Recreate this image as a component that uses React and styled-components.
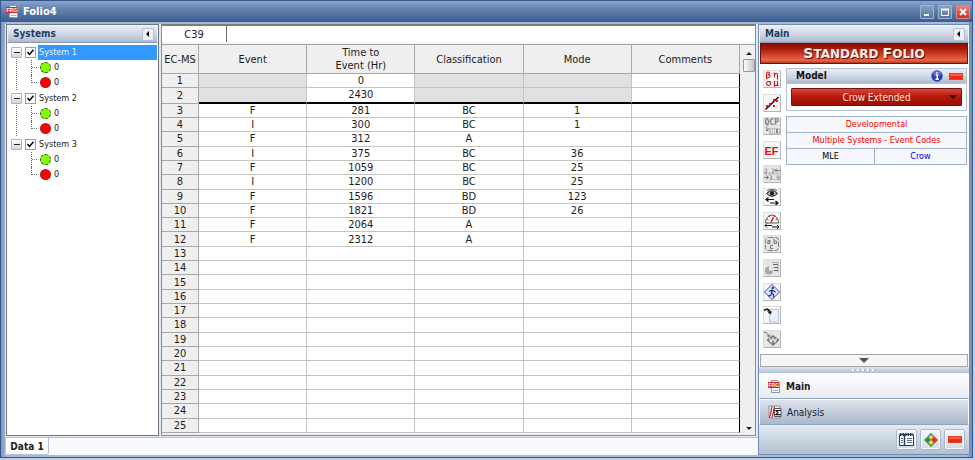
import React, { useState } from 'react';
import styled, { createGlobalStyle, css } from 'styled-components';

const GlobalStyle = createGlobalStyle`
  * {
    box-sizing: border-box;
  }

  body {
    margin: 0;
    font-family: Tahoma, 'DejaVu Sans Condensed', 'DejaVu Sans', sans-serif;
    font-size: 9px;
    color: #1c1c1c;
  }

  button, input {
    font: inherit;
    color: inherit;
  }
`;

const steelBar = 'linear-gradient(#e8edf4 0%, #d3dbe7 45%, #adbacd 100%)';

// Window frame
const Desktop = styled.div`
  height: 100vh;
  padding: 0 2px 2px 0;
  background: #bcd0ea;
`;

const Window = styled.div`
  display: flex;
  flex-direction: column;
  height: 100%;
  border: 1px solid #35568a;
  background: linear-gradient(90deg, #7e97bc, #a9bad3 6px, #a9bad3 calc(100% - 6px), #6f8bb5);
`;

const TitleBar = styled.header`
  display: flex;
  align-items: center;
  gap: 4px;
  flex: none;
  height: 21px;
  padding: 0 2px 0 5px;
  background: linear-gradient(#8ba5ca 0%, #6b89b4 30%, #3a5b8f 100%);
`;

const WindowTitle = styled.h1`
  flex: 1;
  margin: 0;
  font-size: 11px;
  font-weight: 700;
  line-height: 16px;
  color: #fff;
`;

const CaptionButton = styled.button`
  display: flex;
  align-items: center;
  justify-content: center;
  width: 14px;
  height: 14px;
  padding: 0;
  border: 1px solid ${({ $danger }) => ($danger ? '#e08a84' : '#9db4d4')};
  border-radius: 1px;
  background: ${({ $danger }) =>
    $danger ? 'linear-gradient(#ee8077, #c9302b)' : 'linear-gradient(#86a1c8, #56759f)'};
`;

const Body = styled.div`
  display: flex;
  flex: 1;
  min-height: 0;
  padding: 2px 2px 2px 4px;
`;

const Workspace = styled.div`
  display: flex;
  flex-direction: column;
  flex: 1;
  min-width: 0;
`;

const Panes = styled.div`
  display: flex;
  flex: 1;
  gap: 2px;
  min-height: 0;
  padding: 0 2px 1px 1px;
  background: #e3e8ef;
`;

// Systems tree
const SystemsPane = styled.aside`
  display: flex;
  flex-direction: column;
  flex: none;
  width: 153px;
  border: 1px solid #6e7784;
  background: #fff;
`;

const PaneHeader = styled.div`
  display: flex;
  align-items: center;
  justify-content: space-between;
  flex: none;
  height: 18px;
  padding: 0 3px 0 5px;
  border: 1px solid #f1f4f8;
  border-bottom-color: #8898ae;
  background: ${steelBar};
`;

const PaneTitle = styled.h2`
  margin: 0;
  font-size: 10px;
  font-weight: 700;
  line-height: 14px;
  color: ${({ $dark }) => ($dark ? '#111' : '#1f3a66')};
`;

const CollapseButton = styled.button`
  display: flex;
  align-items: center;
  justify-content: center;
  width: 12px;
  height: 13px;
  padding: 0;
  border: 1px solid #b5c0d0;
  border-radius: 2px;
  background: #edf1f6;
`;

const Tree = styled.ul`
  margin: 0;
  padding: 1px 1px 0 4px;
  list-style: none;
`;

// The dotted line joins one system's expander to the next
const TreeGroup = styled.li`
  &:not(:last-child) {
    background: repeating-linear-gradient(#777 0 1px, transparent 1px 2px) 5px 13px / 1px 100% no-repeat;
  }
`;

const TreeRow = styled.div`
  display: flex;
  align-items: center;
  height: 16px;
`;

const Expander = styled.button`
  display: flex;
  align-items: center;
  justify-content: center;
  width: 11px;
  height: 11px;
  padding: 0;
  border: 1px solid #a9b4c4;
  border-radius: 1px;
  background: linear-gradient(#fff, #cfd7e2);

  &::before {
    content: '';
    width: 6px;
    height: 1px;
    background: #222;
  }
`;

const TreeLabel = styled.label`
  display: flex;
  align-items: center;
  flex: 1;
  height: 100%;
`;

const TreeCheck = styled.input`
  appearance: none;
  width: 11px;
  height: 11px;
  margin: 0 2px 0 3px;
  border: 1px solid #8ba0bd;
  background: #fff;

  &:checked {
    background: #fff url("data:image/svg+xml,%3Csvg xmlns='http://www.w3.org/2000/svg' viewBox='0 0 9 9'%3E%3Cpath d='M1.5 4l2 2.4L7.5 1.8' fill='none' stroke='%23000' stroke-width='1.5'/%3E%3C/svg%3E");
  }
`;

const TreeText = styled.span`
  flex: 1;
  height: 15px;
  padding-left: 1px;
  line-height: 15px;
  color: ${({ $selected }) => ($selected ? '#e8f3ff' : '#1c1c1c')};
  background: ${({ $selected }) => ($selected ? '#3399ff' : 'none')};
`;

const TreeLeaves = styled.ul`
  margin: 0;
  padding: 0 0 0 20px;
  list-style: none;
`;

const TreeLeaf = styled.li`
  display: flex;
  align-items: center;
  gap: 3px;
  height: 15px;
  line-height: 15px;
`;

const Branch = styled.span`
  align-self: flex-start;
  width: 7px;
  height: ${({ $last }) => ($last ? 8 : 15)}px;
  margin-right: -1px;
  border-left: 1px dotted #666;
  background: repeating-linear-gradient(90deg, #777 0 1px, transparent 1px 2px) 0 7px / 100% 1px no-repeat;
`;

const Dot = styled.span`
  width: 11px;
  height: 11px;
  border: 1px dashed #444;
  border-radius: 50%;
  background: ${({ $color }) => $color};
`;

// Data sheet
const SheetPane = styled.main`
  display: flex;
  flex-direction: column;
  flex: 1;
  min-width: 0;
  border: 1px solid #8c8c8c;
  border-top: 2px solid #7c7c7c;
  background: #efefef;
`;

const FormulaBar = styled.div`
  display: flex;
  flex: none;
  height: 19px;
  padding-bottom: 2px;
  border-bottom: 1px solid #a0a0a0;
  background: #f4f4f4;
`;

const CellName = styled.label`
  flex: none;
  width: 64px;
  font-size: 11px;
  line-height: 17px;
  text-align: center;
  background: #fff;
`;

const FormulaInput = styled.input`
  flex: 1;
  min-width: 0;
  padding: 0 4px;
  border: 0;
  border-left: 1px solid #707070;
  background: #fff;
  outline: none;
`;

const SheetArea = styled.div`
  display: flex;
  flex: 1;
  min-height: 0;
`;

const SheetScroll = styled.div`
  flex: 1;
  min-width: 0;
  height: 100%;
  padding-bottom: 2px;
  overflow: hidden;
`;

const Sheet = styled.table`
  width: 100%;
  height: 100%;
  table-layout: fixed;
  border-collapse: separate;
  border-spacing: 0;
  font-size: 11px;
  line-height: 13px;
  text-align: center;
`;

const HeadCell = styled.th`
  width: ${({ $narrow }) => ($narrow ? '37px' : 'auto')};
  height: 29px;
  padding: 0;
  border-right: 1px solid #a8a8a8;
  border-bottom: 1px solid #a8a8a8;
  font-weight: 400;
  white-space: pre-line;
  background: #efefef;
`;

const RowHead = styled.th`
  padding: 0;
  border-right: 1px solid #a8a8a8;
  border-bottom: 1px solid #a8a8a8;
  font-weight: 400;
  background: #efefef;
`;

const Cell = styled.td`
  padding: 0;
  border-right: 1px solid #c4c4c4;
  border-bottom: 1px solid #c4c4c4;
  background: ${({ $locked }) => ($locked ? '#e1e1e1' : '#fff')};

  &:last-child {
    border-right: 1px solid #000;
  }

  ${({ $divider }) =>
    $divider &&
    css`
      border-bottom: 2px solid #000;
    `}
`;

const ScrollBar = styled.div`
  display: flex;
  flex-direction: column;
  align-items: center;
  flex: none;
  width: 15px;
  padding: 3px 0 2px 3px;
  background: #efefef;
`;

const ScrollArrow = styled.button`
  display: flex;
  width: 12px;
  height: 10px;
  padding: 0;
  align-items: center;
  justify-content: center;
  border: 0;
  background: none;
`;

const ScrollThumb = styled.div`
  width: 12px;
  height: 13px;
  margin: 1px 0 auto;
  border: 1px solid #979797;
  border-radius: 1px;
  background: linear-gradient(90deg, #fafafa, #c6c6c6);
`;

// Sheet tabs
const SheetTabs = styled.nav`
  display: flex;
  flex: none;
  height: 18px;
  border-top: 1px solid #b4c4da;
  background: #f8fafd;
`;

const SheetTab = styled.button`
  width: 44px;
  padding: 0;
  border: 1px solid #b4c4da;
  border-top: 0;
  border-radius: 0 0 3px 3px;
  font-size: 10px;
  font-weight: 700;
  white-space: nowrap;
  background: #fff;
`;

// Control panel
const ControlPanel = styled.aside`
  display: flex;
  flex-direction: column;
  flex: none;
  width: 212px;
  border: 1px solid #6d8cba;
  background: #fff;
`;

const Banner = styled.div`
  flex: none;
  height: 21px;
  margin: 0 1px;
  border: 1px solid #6b1510;
  font-family: 'DejaVu Sans', sans-serif;
  font-size: 12px;
  font-weight: 700;
  line-height: 19px;
  text-align: center;
  color: #f6efee;
  text-shadow: 1px 1px 1px #5c0c06;
  background: linear-gradient(#8f0d03 0%, #a81a0a 25%, #e2593c 75%, #e8694a 85%, #b03a20 100%);
`;

const BannerCap = styled.span`
  font-size: 14px;
`;

const PanelBody = styled.div`
  display: flex;
  flex: 1;
  gap: 4px;
  min-height: 0;
  padding: 4px 2px 6px 4px;
`;

const ToolColumn = styled.div`
  display: flex;
  flex-direction: column;
  justify-content: space-between;
  flex: none;
  width: 19px;
  padding-top: 2px;
`;

const ToolButton = styled.button`
  display: flex;
  width: 18px;
  height: 18px;
  padding: 0;
  border: 1px solid #dedede;
  border-right-color: #b5b5b5;
  border-bottom-color: #b5b5b5;
  background: ${({ $muted }) => ($muted ? '#e6e6e6' : '#f6f6f6')};
`;

const Settings = styled.div`
  display: flex;
  flex-direction: column;
  flex: 1;
  gap: 5px;
`;

const ModelBox = styled.section`
  border: 1px solid #b7c3d3;
  background: #fdfdfe;
`;

const ModelHeader = styled.div`
  display: flex;
  align-items: center;
  gap: 6px;
  height: 15px;
  padding: 0 3px 0 9px;
  border-bottom: 1px solid #b7c3d3;
  background: ${steelBar};

  h2 {
    flex: 1;
  }
`;

const ModelButton = styled.button`
  display: flex;
  align-items: center;
  width: calc(100% - 8px);
  height: 18px;
  margin: 4px;
  padding: 0 4px 0 12px;
  border: 1px solid #7d1008;
  border-radius: 1px;
  font-size: 10px;
  color: #fbe3dd;
  background: linear-gradient(#d5493b 0%, #b91a0c 45%, #9a0e04 100%);

  span {
    flex: 1;
    text-align: center;
  }
`;

const Summary = styled.div`
  display: grid;
  grid-template-columns: 87fr 91fr;
  gap: 1px;
  border: 1px solid #9db0c8;
  background: #9db0c8;
`;

const SummaryItem = styled.div`
  grid-column: ${({ $wide }) => ($wide ? '1 / -1' : 'auto')};
  height: 15px;
  line-height: 15px;
  text-align: center;
  white-space: nowrap;
  color: ${({ $color }) => $color};
  background: #f5f7fa;
`;

const MoreButton = styled.button`
  display: flex;
  align-items: center;
  justify-content: center;
  flex: none;
  height: 13px;
  margin: 0 1px;
  padding: 0;
  border: 1px solid #a6a6a6;
  background: #f4f5f6;
`;

const Grip = styled.div`
  display: flex;
  align-items: center;
  justify-content: center;
  flex: none;
  height: 6px;
  background: linear-gradient(#dce3ec, #b4c1d3);

  &::before {
    content: '';
    width: 24px;
    height: 2px;
    background: repeating-linear-gradient(90deg, #f8fafc 0 2px, #9aa9be 2px 3px, transparent 3px 5px);
  }
`;

const NavItem = styled.button`
  display: flex;
  align-items: center;
  gap: 5px;
  flex: none;
  height: 26px;
  padding: 0 8px;
  border: 1px solid #fff;
  border-bottom-color: #8ea3c2;
  font-size: 10px;
  font-weight: ${({ $active }) => ($active ? 700 : 400)};
  background: ${({ $active }) =>
    $active ? 'linear-gradient(#fdfdfe, #e9ecf1)' : 'linear-gradient(#dde4ed, #abb9cd)'};
`;

const Shortcuts = styled.div`
  display: flex;
  align-items: center;
  justify-content: flex-end;
  gap: 3px;
  flex: none;
  height: 29px;
  padding-right: 4px;
  background: linear-gradient(#e6ebf2, #b3c0d2);
`;

const ShortcutButton = styled.button`
  display: flex;
  align-items: center;
  justify-content: center;
  width: 21px;
  height: 21px;
  padding: 0;
  border: 1px solid #a9b8cd;
  border-radius: 2px;
  background: linear-gradient(#f5f7fa, #d2dae5);
  box-shadow: inset 0 0 0 1px #f8fafc;
`;

const RedBar = styled.span`
  width: 14px;
  height: 7px;
  border: 1px solid #d8452f;
  background: linear-gradient(#ff5a3a 0 45%, #ee2a14 45%);
`;

const Triangle = ({ dir, size = 6, color = '#222' }) => {
  const shapes = {
    up: { points: '0,5 5,0 10,5', box: '0 0 10 5', height: size / 2 },
    down: { points: '0,0 10,0 5,5', box: '0 0 10 5', height: size / 2 },
    left: { points: '5,1 5,7 2,4', box: '0 0 8 8', height: size },
  };
  const { points, box, height } = shapes[dir];
  return (
    <svg width={size} height={height} viewBox={box}>
      <polygon points={points} fill={color} />
    </svg>
  );
};

const FolioIcon = ({ size = 13 }) => (
  <svg width={size} height={size} viewBox="0 0 13 13">
    <path d="M3.5.5h6l2 2v10h-8z" fill="#f4f6f9" stroke="#8d97a5" />
    <path d="M5 10.5h5M9.5 3.5h1" stroke="#a9b2be" />
    <rect x="0" y="2" width="11" height="6" fill="#d6222c" />
    <text x="0.5" y="6.8" fontSize="5" fontWeight="700" fontFamily="Liberation Sans" fill="#fff">FRG</text>
  </svg>
);

const AnalysisIcon = () => (
  <svg width="14" height="14" viewBox="0 0 14 14">
    <path d="M1 1h11v12H1z" fill="#e8edf4" stroke="#8995a8" />
    <path d="M1 12.5c2 0 2-11 3.5-11M3.5 12.5c2 0 2-11 3.5-11" fill="none" stroke="#d8141c" strokeWidth="1.2" />
    <path d="M6.5 3.5h6.5v8h-6.5z" fill="#fff" stroke="#555" />
    <path d="M12 6V5.500H8l2 2L8 9.700h4V9" fill="none" stroke="#111" strokeWidth="1.2" />
  </svg>
);

const InfoIcon = () => (
  <svg width="12" height="12" viewBox="0 0 12 12">
    <circle cx="6" cy="6" r="5.7" fill="#2c3fb8" />
    <ellipse cx="6" cy="3.5" rx="4" ry="2.5" fill="#7f93e6" opacity="0.6" />
    <path d="M6 2v1.6M4.8 5H6.3v4M4.5 9.3h3.3" fill="none" stroke="#fff" strokeWidth="1.5" />
  </svg>
);

// Drawn on a 16 x 16 grid
const toolIcons = [
  {
    name: 'Parameters',
    art: (
      <g fill="none" stroke="#d80f18" strokeWidth="1.1">
        <path d="M2.5 8V2.5q0-1.5 1.5-1.5t1.5 1.3-2 1.4q2.5 0 2.5 1.5T4 6.7 2.5 6" />
        <path d="M9.5 2l1 .5v4M10.5 3.5q2.5-2.5 3 0V8.5" />
        <path d="M6.8 10.5H4.3a2 2 0 1 0 1.2.2" />
        <path d="M10.5 10v5.8M10.5 13q0 1.5 1.5 1.5t1.5-1.5v-3M13.5 13v1.5h1" />
      </g>
    ),
  },
  {
    name: 'Plot',
    art: (
      <g>
        <path d="M1.5 14.5L14.5 2" stroke="#111" strokeWidth="1.5" />
        <path d="M2 10h2v2H2zM5 8h2v2H5zM9 10h2v2H9zM9 4h2v2H9zM12 5h2v2h-2z" fill="#e8141c" />
      </g>
    ),
  },
  {
    name: 'Quick Calculation Pad',
    muted: true,
    art: (
      <g>
        <text x="0.5" y="7" fontFamily="DejaVu Sans Mono" fontWeight="700" fontSize="8" fill="#7c7c7c">QCP</text>
        <path d="M3 8.5a2 2 0 0 0 1 3.5M4 10v2.5H2" fill="none" stroke="#7c7c7c" />
        <path d="M5.5 10.5h10v5h-10z" fill="#f0f0f0" stroke="#c0c0c0" />
        <path d="M6 12h6M6 14h6" stroke="#888" strokeDasharray="1 1" />
        <path d="M13 11v4" stroke="#888" strokeWidth="2" />
      </g>
    ),
  },
  {
    name: 'Event Filter',
    art: (
      <text x="0.5" y="12.5" fontFamily="Liberation Sans" fontWeight="700" fontSize="11" fill="#e00f18">EF</text>
    ),
  },
  {
    name: 'Change Units',
    muted: true,
    art: (
      <g fontFamily="DejaVu Sans Mono" fontSize="6" fill="#666">
        <text x="0" y="6.5">2.2</text>
        <path d="M11 4.5h5M13 2.5l-2 2 2 2" fill="none" stroke="#777" />
        <path d="M0 11.5h4.5M2.5 9.5l2 2-2 2" fill="none" stroke="#777" />
        <text x="5" y="14">3.0</text>
        <path d="M0 8h16" stroke="#aaa" />
      </g>
    ),
  },
  {
    name: 'Show or Hide',
    art: (
      <g>
        <path d="M2.5 4.5Q8-1 13.500 4.500Q8 10 2.500 4.500z" fill="#bbb" stroke="#111" />
        <circle cx="8" cy="4.500" r="2" fill="#111" />
        <path d="M3 1.500Q8-1 13 1.500" fill="none" stroke="#555" />
        <path d="M2 10.500h8M4.500 8.500l-2.500 2 2.500 2M6 14h8M11.500 12l2.500 2-2.500 2" fill="none" stroke="#111" strokeWidth="1.2" />
      </g>
    ),
  },
  {
    name: 'Gauge',
    art: (
      <g>
        <path d="M1.5 10a6.5 8 0 1 1 13 0z" fill="#fff" stroke="#555" />
        <path d="M3 6l1.5 1M5 2.5l1 1.5M11 2.5L10 4M13 6l-1.5 1" stroke="#d8141c" />
        <path d="M7 9.5L9.5 4" stroke="#d8141c" strokeWidth="1.5" />
        <path d="M1 12.5h7M3 10.5l-2 2 2 2M8 14h7M13 12l2 2-2 2" fill="none" stroke="#111" />
      </g>
    ),
  },
  {
    name: 'Batch Rename',
    muted: true,
    art: (
      <g>
        <rect x="1.5" y="1.5" width="13" height="13" rx="3" fill="none" stroke="#777" strokeDasharray="5 1.5" />
        <g fill="none" stroke="#777">
          <path d="M3.5 4.5h2.5v3h-2.5v-1.5h2.5" />
          <path d="M10 2.5v5h2.5v-2.5h-2.5" />
          <path d="M9 9.5h-2.5v3h2.5" />
        </g>
      </g>
    ),
  },
  {
    name: 'Schedule',
    muted: true,
    art: (
      <g>
        <circle cx="5" cy="10.5" r="4" fill="#a6a6a6" />
        <path d="M5 10.5V6.5a4 4 0 0 1 4 4z" fill="#eee" />
        <path d="M8 2.5h6v10" fill="none" stroke="#aaa" />
        <path d="M9 4.5h5M10 7.5h4M10 10.5h4" stroke="#666" />
      </g>
    ),
  },
  {
    name: 'Run Wizard',
    art: (
      <g>
        <path d="M8 .5L15.5 8 8 15.5.5 8z" fill="#e4ebff" stroke="#2b47b0" />
        <circle cx="8.7" cy="4" r="1.2" fill="#17309c" />
        <path d="M8.3 5.5L7.5 9l2 1.5v3M7.5 9.5l-1 2-2 .5M8 6l-3 1.5M8.5 6.2l3 2" fill="none" stroke="#17309c" strokeWidth="1.3" />
      </g>
    ),
  },
  {
    name: 'Transfer',
    art: (
      <g>
        <path d="M5.5 2.5h9v12.5h-9z" fill="#e9f0fc" stroke="#b9c6dc" />
        <path d="M0 3.5Q4 .5 6 5" fill="none" stroke="#111" strokeWidth="1.6" />
        <path d="M3 4.5h5L6.5 7.5z" fill="#111" />
      </g>
    ),
  },
  {
    name: 'Transfer to Weibull',
    muted: true,
    art: (
      <g>
        <path d="M0 1.5Q4 1 5 6M3 4.5l2 1.5 1-2.5" fill="none" stroke="#777" />
        <path d="M9 4.5l6 4.5-6 5.5-6-5.5z" fill="#888" stroke="#777" />
        <path d="M5.5 7.5l1.5 3.5L9 7.5l2 3.5 1.5-3.5" fill="none" stroke="#eee" strokeWidth="1.2" />
      </g>
    ),
  },
];

const systems = ['System 1', 'System 2', 'System 3'];

const columns = ['Event', 'Time to\nEvent (Hr)', 'Classification', 'Mode', 'Comments'];

const records = [
  ['', '0', '', '', ''],
  ['', '2430', '', '', ''],
  ['F', '281', 'BC', '1', ''],
  ['I', '300', 'BC', '1', ''],
  ['F', '312', 'A', '', ''],
  ['I', '375', 'BC', '36', ''],
  ['F', '1059', 'BC', '25', ''],
  ['I', '1200', 'BC', '25', ''],
  ['F', '1596', 'BD', '123', ''],
  ['F', '1821', 'BD', '26', ''],
  ['F', '2064', 'A', '', ''],
  ['F', '2312', 'A', '', ''],
];

const ROW_COUNT = 25;
const rows = Array.from({ length: ROW_COUNT }, (_, i) => records[i] || ['', '', '', '', '']);

// The first two rows hold start and end times, everything but time and comments is locked
const isLocked = (row, col) => row < 2 && [0, 2, 3].includes(col);

const SystemsTree = () => {
  const [selected, setSelected] = useState('System 1');

  return (
    <Tree>
      {systems.map((name) => (
        <TreeGroup key={name}>
          <TreeRow onClick={() => setSelected(name)}>
            <Expander aria-label={`Collapse ${name}`} />
            <TreeLabel>
              <TreeCheck type="checkbox" defaultChecked />
              <TreeText $selected={selected === name}>{name}</TreeText>
            </TreeLabel>
          </TreeRow>
          <TreeLeaves>
            <TreeLeaf>
              <Branch />
              <Dot $color="#80ff00" />
              0
            </TreeLeaf>
            <TreeLeaf>
              <Branch $last />
              <Dot $color="#ff0000" />
              0
            </TreeLeaf>
          </TreeLeaves>
        </TreeGroup>
      ))}
    </Tree>
  );
};

const DataSheet = () => (
  <SheetPane>
    <FormulaBar>
      <CellName htmlFor="cell-value">C39</CellName>
      <FormulaInput id="cell-value" type="text" />
    </FormulaBar>
    <SheetArea>
      <SheetScroll>
        <Sheet>
          <thead>
            <tr>
              <HeadCell scope="col" $narrow>EC-MS</HeadCell>
              {columns.map((label) => (
                <HeadCell scope="col" key={label}>{label}</HeadCell>
              ))}
            </tr>
          </thead>
          <tbody>
            {rows.map((row, r) => (
              <tr key={r}>
                <RowHead scope="row">{r + 1}</RowHead>
                {row.map((value, c) => (
                  <Cell key={c} $locked={isLocked(r, c)} $divider={r === 1}>{value}</Cell>
                ))}
              </tr>
            ))}
          </tbody>
        </Sheet>
      </SheetScroll>
      <ScrollBar>
        <ScrollArrow aria-label="Scroll up"><Triangle dir="up" /></ScrollArrow>
        <ScrollThumb />
        <ScrollArrow aria-label="Scroll down"><Triangle dir="down" /></ScrollArrow>
      </ScrollBar>
    </SheetArea>
  </SheetPane>
);

const MainPanel = () => (
  <ControlPanel>
    <PaneHeader>
      <PaneTitle>Main</PaneTitle>
      <CollapseButton aria-label="Collapse panel"><Triangle dir="left" size={8} color="#000" /></CollapseButton>
    </PaneHeader>
    <Banner>
      <BannerCap>S</BannerCap>TANDARD <BannerCap>F</BannerCap>OLIO
    </Banner>
    <PanelBody>
      <ToolColumn>
        {toolIcons.map(({ name, muted, art }) => (
          <ToolButton key={name} aria-label={name} $muted={muted}>
            <svg width="16" height="16" viewBox="0 0 16 16">{art}</svg>
          </ToolButton>
        ))}
      </ToolColumn>
      <Settings>
        <ModelBox>
          <ModelHeader>
            <PaneTitle $dark>Model</PaneTitle>
            <InfoIcon />
            <RedBar />
          </ModelHeader>
          <ModelButton>
            <span>Crow Extended</span>
            <Triangle dir="down" size={8} color="#2a0502" />
          </ModelButton>
        </ModelBox>
        <Summary>
          <SummaryItem $wide $color="#ff0000">Developmental</SummaryItem>
          <SummaryItem $wide $color="#ff0000">Multiple Systems - Event Codes</SummaryItem>
          <SummaryItem $color="#000">MLE</SummaryItem>
          <SummaryItem $color="#0000ff">Crow</SummaryItem>
        </Summary>
      </Settings>
    </PanelBody>
    <MoreButton aria-label="More tools"><Triangle dir="down" size={10} color="#555" /></MoreButton>
    <Grip />
    <NavItem $active><FolioIcon /> Main</NavItem>
    <NavItem><AnalysisIcon /> Analysis</NavItem>
    <Shortcuts>
      <ShortcutButton aria-label="Notes">
        <svg width="15" height="15" viewBox="0 0 15 15">
          <path d="M.5 2.5h14v11H.5z" fill="#fff" stroke="#24405e" />
          <path d="M1 2.5h13" stroke="#24405e" strokeWidth="3" strokeDasharray="1.5 1" />
          <path d="M5.5 3v10" stroke="#24405e" strokeWidth="1.5" />
          <path d="M8 6.5h5M8 8.5h5M8 10.5h5M2 6.5h2M2 8.5h2M2 10.5h2" stroke="#5c7288" />
        </svg>
      </ShortcutButton>
      <ShortcutButton aria-label="Report">
        <svg width="14" height="14" viewBox="0 0 14 14">
          <path d="M7 0l3.5 3.5L7 7 3.5 3.5z" fill="#2f62c4" />
          <path d="M3.5 3.5L7 7l-3.5 3.5L0 7z" fill="#3f9c2c" />
          <path d="M10.5 3.5L14 7l-3.5 3.5L7 7z" fill="#d8382c" />
          <path d="M7 7l3.5 3.5L7 14l-3.5-3.5z" fill="#3f9c2c" />
          <circle cx="7" cy="4" r="2" fill="#f4d82a" />
          <circle cx="7" cy="9.5" r="2" fill="#f4d82a" />
          <circle cx="4" cy="7" r="1.3" fill="#2f62c4" />
        </svg>
      </ShortcutButton>
      <ShortcutButton aria-label="Close panel"><RedBar /></ShortcutButton>
    </Shortcuts>
  </ControlPanel>
);

export default function App() {
  return (
    <Desktop>
      <GlobalStyle />
      <Window>
        <TitleBar>
          <FolioIcon />
          <WindowTitle>Folio4</WindowTitle>
          <CaptionButton aria-label="Minimize">
            <svg width="10" height="10" viewBox="0 0 10 10"><path d="M2 8h5" stroke="#fff" strokeWidth="2" /></svg>
          </CaptionButton>
          <CaptionButton aria-label="Maximize">
            <svg width="10" height="10" viewBox="0 0 10 10">
              <path d="M1.5 2v6.5h7V2" fill="none" stroke="#fff" />
              <path d="M1 2.5h8" stroke="#fff" strokeWidth="2" />
            </svg>
          </CaptionButton>
          <CaptionButton aria-label="Close" $danger>
            <svg width="10" height="10" viewBox="0 0 10 10"><path d="M2 2l6 6M8 2L2 8" stroke="#fff" strokeWidth="1.8" /></svg>
          </CaptionButton>
        </TitleBar>
        <Body>
          <Workspace>
            <Panes>
              <SystemsPane>
                <PaneHeader>
                  <PaneTitle>Systems</PaneTitle>
                  <CollapseButton aria-label="Collapse systems"><Triangle dir="left" size={8} color="#000" /></CollapseButton>
                </PaneHeader>
                <SystemsTree />
              </SystemsPane>
              <DataSheet />
            </Panes>
            <SheetTabs>
              <SheetTab>Data 1</SheetTab>
            </SheetTabs>
          </Workspace>
          <MainPanel />
        </Body>
      </Window>
    </Desktop>
  );
}
